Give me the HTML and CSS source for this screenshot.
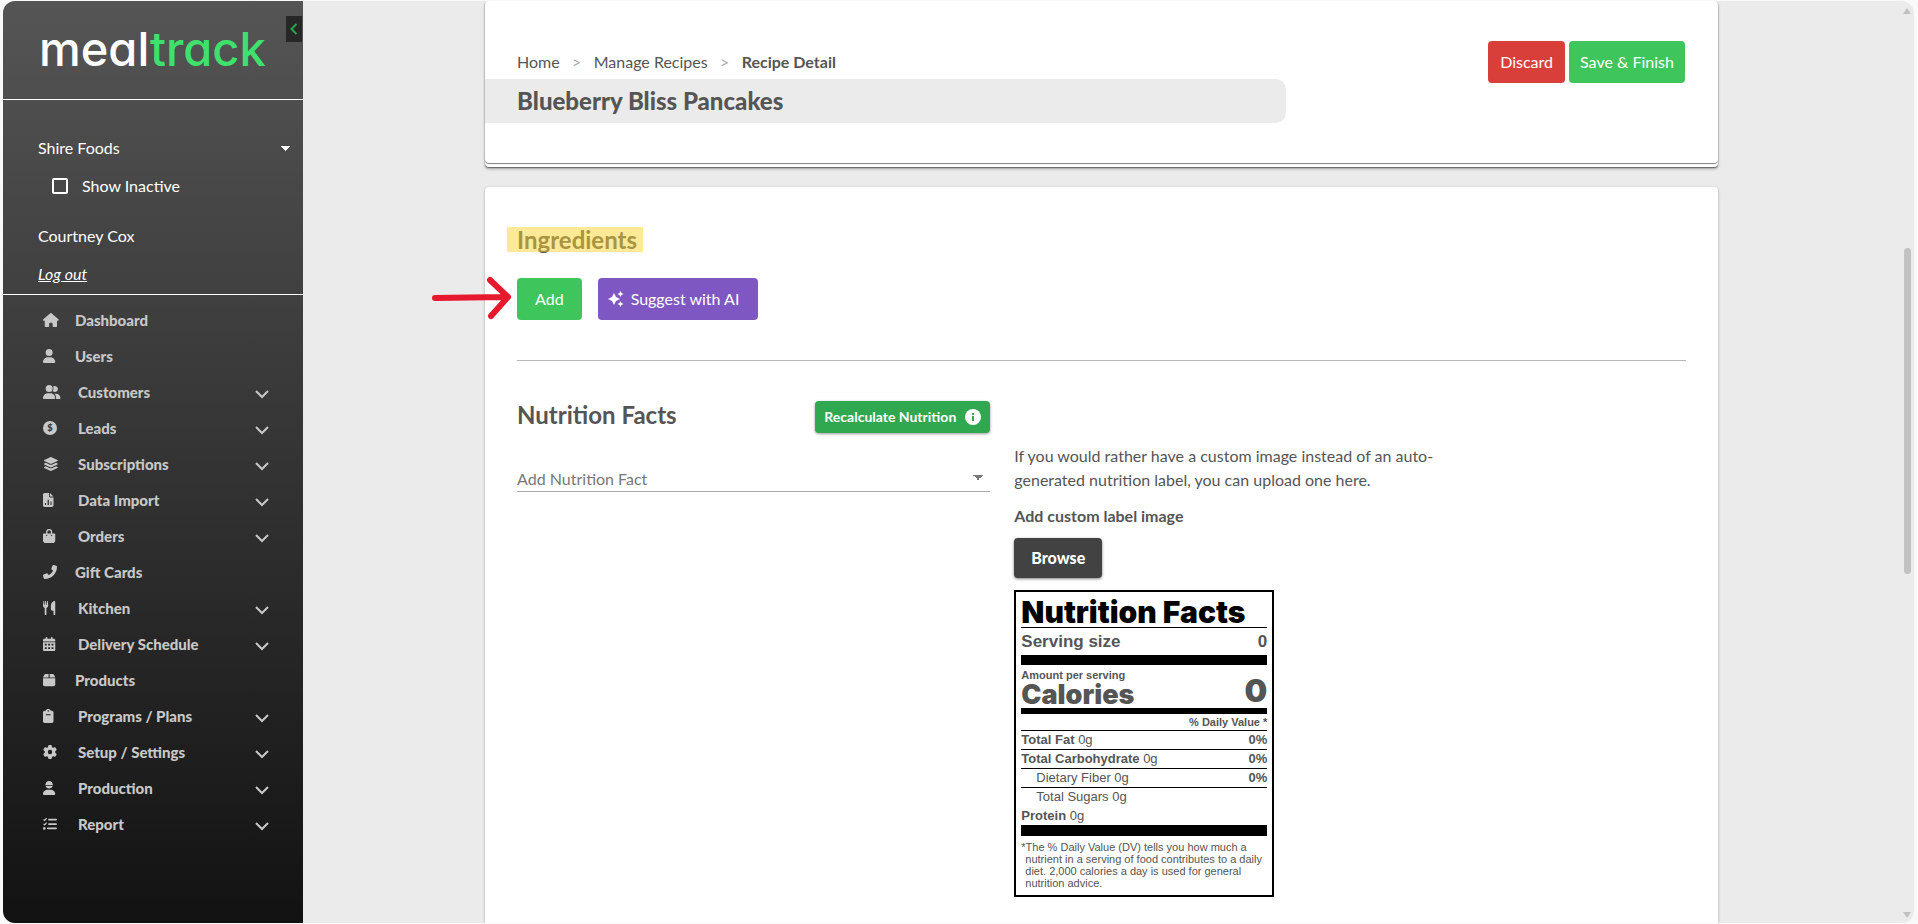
FILE: index.html
```html
<!DOCTYPE html>
<html lang="en">
<head>
    <meta charset="UTF-8">
    <title>Recipe Detail</title>
    <link rel="stylesheet" href="styles.css">
</head>
<body>
    <div class="app">
        <aside class="sidebar">
            <div class="brand">
                <a class="logo" href="#">meal<span class="logo-green">track</span></a>
                <button class="collapse" type="button" aria-label="Collapse menu">
                    <svg width="8" height="12" viewBox="0 0 8 12"><path d="M6.5 1 1.5 6l5 5"/></svg>
                </button>
            </div>
            <div class="account">
                <select class="company" aria-label="Company">
                    <option>Shire Foods</option>
                </select>
                <label class="inactive"><input class="check" type="checkbox">Show Inactive</label>
                <div class="user">Courtney Cox</div>
                <a class="logout" href="#">Log out</a>
            </div>
            <nav class="menu">
                <a class="item" href="#">
                    <svg class="icon" viewBox="0 0 576 512" preserveAspectRatio="xMinYMid"><path d="M575.8 255.5c0 18-15 32.1-32 32.1h-32l.7 160.2c0 2.7-.2 5.4-.5 8.1V472c0 22.1-17.9 40-40 40H392c-22.1 0-40-17.9-40-40v-88c0-17.7-14.3-32-32-32h-64c-17.7 0-32 14.3-32 32v88c0 22.1-17.9 40-40 40h-80c-22.1 0-40-17.9-40-40V287.6H32c-18 0-32-14-32-32.1 0-9 3-17 10-24L266.4 8c7-7 15-8 22-8s15 2 21 7l255.4 224.5c8 7 12 15 11 24z"/></svg>
                    <span>Dashboard</span>
                </a>
                <a class="item" href="#">
                    <svg class="icon" viewBox="0 0 448 512" preserveAspectRatio="xMinYMid"><path d="M224 256A128 128 0 1 0 224 0a128 128 0 1 0 0 256zm-45.7 48C79.8 304 0 383.8 0 482.3 0 498.7 13.3 512 29.7 512h388.6c16.4 0 29.7-13.3 29.7-29.7 0-98.5-79.8-178.3-178.3-178.3z"/></svg>
                    <span>Users</span>
                </a>
                <a class="item more" href="#">
                    <svg class="icon" viewBox="0 0 640 512" preserveAspectRatio="xMinYMid"><path d="M96 128a128 128 0 1 1 256 0 128 128 0 1 1-256 0zM0 482.3C0 383.8 79.8 304 178.3 304h91.4C368.2 304 448 383.8 448 482.3c0 16.4-13.3 29.7-29.7 29.7H29.7C13.3 512 0 498.7 0 482.3zM609.3 512H471.4c5.4-9.4 8.6-20.3 8.6-32v-8c0-60.7-27.1-115.2-69.8-151.8 2.4-.1 4.7-.2 7.1-.2h61.4C567.8 320 640 392.2 640 481.3c0 17-13.8 30.7-30.7 30.7zM432 256c-31 0-59-12.6-79.3-32.9C372.4 196.5 384 163.6 384 128c0-26.8-6.6-52.1-18.3-74.3C384.3 40.1 407.2 32 432 32c61.9 0 112 50.1 112 112s-50.1 112-112 112z"/></svg>
                    <span>Customers</span>
                    <svg class="chevron" viewBox="0 0 14 9"><path d="M1 1l6 6 6-6"/></svg>
                </a>
                <a class="item more" href="#">
                    <svg class="icon" viewBox="0 0 512 512" preserveAspectRatio="xMinYMid"><circle cx="256" cy="256" r="256"/><text class="coin" x="256" y="376" text-anchor="middle">$</text></svg>
                    <span>Leads</span>
                    <svg class="chevron" viewBox="0 0 14 9"><path d="M1 1l6 6 6-6"/></svg>
                </a>
                <a class="item more" href="#">
                    <svg class="icon" viewBox="0 0 576 512" preserveAspectRatio="xMinYMid"><path d="M264.5 5.2c14.9-6.9 32.1-6.9 47 0l218.6 101c8.5 3.9 13.9 12.4 13.9 21.8s-5.4 17.9-13.9 21.8l-218.6 101c-14.9 6.9-32.1 6.9-47 0L45.9 149.8C37.4 145.8 32 137.3 32 128s5.4-17.9 13.9-21.8zM476.9 209.6l53.2 24.6c8.5 3.9 13.9 12.4 13.9 21.8s-5.4 17.9-13.9 21.8l-218.6 101c-14.9 6.9-32.1 6.9-47 0L45.9 277.8C37.4 273.8 32 265.3 32 256s5.4-17.9 13.9-21.8l53.2-24.6 152 70.2c23.4 10.8 50.4 10.8 73.8 0zm-152 198.2 152-70.2 53.2 24.6c8.5 3.9 13.9 12.4 13.9 21.8s-5.4 17.9-13.9 21.8l-218.6 101c-14.9 6.9-32.1 6.9-47 0L45.9 405.8C37.4 401.8 32 393.3 32 384s5.4-17.9 13.9-21.8l53.2-24.6 152 70.2c23.4 10.8 50.4 10.8 73.8 0z"/></svg>
                    <span>Subscriptions</span>
                    <svg class="chevron" viewBox="0 0 14 9"><path d="M1 1l6 6 6-6"/></svg>
                </a>
                <a class="item more" href="#">
                    <svg class="icon" viewBox="0 0 384 512" preserveAspectRatio="xMinYMid"><path fill-rule="evenodd" d="M64 0h160v128c0 18 14 32 32 32h128v288c0 35-29 64-64 64H64c-35 0-64-29-64-64V64C0 29 29 0 64 0zm192 0 128 128H256zM72 368v72h40v-72zm96-120v192h48V248zm104 64v128h40V312z"/></svg>
                    <span>Data Import</span>
                    <svg class="chevron" viewBox="0 0 14 9"><path d="M1 1l6 6 6-6"/></svg>
                </a>
                <a class="item more" href="#">
                    <svg class="icon" viewBox="0 0 448 512" preserveAspectRatio="xMinYMid"><path fill-rule="evenodd" d="M112 160v-48a112 112 0 0 1 224 0v48h80c18 0 32 14 32 32v224c0 53-43 96-96 96H96c-53 0-96-43-96-96V192c0-18 14-32 32-32zm48 0h128v-48a64 64 0 0 0-128 0zm-24 96a24 24 0 1 0 0-48 24 24 0 0 0 0 48zm176 0a24 24 0 1 0 0-48 24 24 0 0 0 0 48z"/></svg>
                    <span>Orders</span>
                    <svg class="chevron" viewBox="0 0 14 9"><path d="M1 1l6 6 6-6"/></svg>
                </a>
                <a class="item" href="#">
                    <svg class="icon" viewBox="0 0 512 512" preserveAspectRatio="xMinYMid"><path d="M347.1 24.6c7.7-18.6 28-28.5 47.4-23.2l88 24C499.9 30.2 512 46 512 64c0 247.4-200.6 448-448 448-18 0-33.8-12.1-38.6-29.5l-24-88c-5.3-19.4 4.6-39.7 23.2-47.4l96-40c16.3-6.8 35.2-2.1 46.3 11.6L207.3 368c70.4-33.3 127.4-90.3 160.7-160.7L318.7 167c-13.7-11.2-18.4-30-11.6-46.3z"/></svg>
                    <span>Gift Cards</span>
                </a>
                <a class="item more" href="#">
                    <svg class="icon" viewBox="0 0 448 512" preserveAspectRatio="xMinYMid"><path d="M0 150 16 14C18-4 46-4 46 14v136h18L80 12c2-16 30-16 32 0l16 138h18V14c0-18 28-18 30 0l16 136c4 55-34 98-66 106v224c0 42-64 42-64 0V256C30 248-4 205 0 150zM416 0c18 0 32 14 32 32v448c0 42-64 42-64 0V352h-32c-35 0-64-29-64-64V176C288 60 380 0 416 0z"/></svg>
                    <span>Kitchen</span>
                    <svg class="chevron" viewBox="0 0 14 9"><path d="M1 1l6 6 6-6"/></svg>
                </a>
                <a class="item more" href="#">
                    <svg class="icon" viewBox="0 0 448 512" preserveAspectRatio="xMinYMid"><path fill-rule="evenodd" d="M96 64V32c0-42 64-42 64 0v32h128V32c0-42 64-42 64 0v32h48c26 0 48 22 48 48v48H0v-48c0-26 22-48 48-48zM0 192h448v272c0 26-22 48-48 48H48c-26 0-48-22-48-48zm64 56v64h72v-64zm124 0v64h72v-64zm124 0v64h72v-64zM64 376v64h72v-64zm124 0v64h72v-64zm124 0v64h72v-64z"/></svg>
                    <span>Delivery Schedule</span>
                    <svg class="chevron" viewBox="0 0 14 9"><path d="M1 1l6 6 6-6"/></svg>
                </a>
                <a class="item" href="#">
                    <svg class="icon" viewBox="0 0 448 512" preserveAspectRatio="xMinYMid"><path d="M98 32h106v128H0l41-90c12-24 32-38 57-38zm146 0h106c25 0 45 14 57 38l41 90H244zM0 192h448v224c0 35-29 64-64 64H64c-35 0-64-29-64-64z"/></svg>
                    <span>Products</span>
                </a>
                <a class="item more" href="#">
                    <svg class="icon" viewBox="0 0 384 512" preserveAspectRatio="xMinYMid"><path fill-rule="evenodd" d="M101 64C120-21 264-21 283 64h37c35 0 64 29 64 64v320c0 35-29 64-64 64H64c-35 0-64-29-64-64V128c0-35 29-64 64-64zm91-16a26 26 0 1 0 0 52 26 26 0 0 0 0-52zm-88 144v32h176v-32z"/></svg>
                    <span>Programs / Plans</span>
                    <svg class="chevron" viewBox="0 0 14 9"><path d="M1 1l6 6 6-6"/></svg>
                </a>
                <a class="item more" href="#">
                    <svg class="icon" viewBox="0 0 512 512" preserveAspectRatio="xMinYMid"><path d="M495.9 166.6c3.2 8.7 .5 18.4-6.4 24.6l-43.3 39.4c1.1 8.3 1.7 16.8 1.7 25.4s-.6 17.1-1.7 25.4l43.3 39.4c6.9 6.2 9.6 15.9 6.4 24.6-4.4 11.9-9.7 23.3-15.8 34.3l-4.7 8.1c-6.6 11-14 21.4-22.1 31.2-5.9 7.2-15.7 9.6-24.5 6.8l-55.7-17.7c-13.4 10.3-28.2 18.9-44 25.4l-12.5 57.1c-2 9.1-9 16.3-18.2 17.8-13.8 2.3-28 3.5-42.5 3.5s-28.7-1.2-42.5-3.5c-9.2-1.5-16.2-8.7-18.2-17.8l-12.5-57.1c-15.8-6.5-30.6-15.1-44-25.4L83.1 425.9c-8.8 2.8-18.6 .3-24.5-6.8-8.1-9.8-15.5-20.2-22.1-31.2l-4.7-8.1c-6.1-11-11.4-22.4-15.8-34.3-3.2-8.7-.5-18.4 6.4-24.6l43.3-39.4C64.6 273.1 64 264.6 64 256s.6-17.1 1.7-25.4L22.4 191.2c-6.9-6.2-9.6-15.9-6.4-24.6 4.4-11.9 9.7-23.3 15.8-34.3l4.7-8.1c6.6-11 14-21.4 22.1-31.2 5.9-7.2 15.7-9.6 24.5-6.8l55.7 17.7c13.4-10.3 28.2-18.9 44-25.4l12.5-57.1c2-9.1 9-16.3 18.2-17.8C227.3 1.2 241.5 0 256 0s28.7 1.2 42.5 3.5c9.2 1.5 16.2 8.7 18.2 17.8l12.5 57.1c15.8 6.5 30.6 15.1 44 25.4l55.7-17.7c8.8-2.8 18.6-.3 24.5 6.8 8.1 9.8 15.5 20.2 22.1 31.2l4.7 8.1c6.1 11 11.4 22.4 15.8 34.3zM256 336a80 80 0 1 0 0-160 80 80 0 1 0 0 160z"/></svg>
                    <span>Setup / Settings</span>
                    <svg class="chevron" viewBox="0 0 14 9"><path d="M1 1l6 6 6-6"/></svg>
                </a>
                <a class="item more" href="#">
                    <svg class="icon" viewBox="0 0 448 512" preserveAspectRatio="xMinYMid"><path d="M96 128a128 128 0 0 1 256 0h16v28H80v-28zm0 54h256C340 300 108 300 96 182zM178 320h92c98 0 178 64 178 162 0 17-13 30-30 30H30c-17 0-30-13-30-30 0-98 80-162 178-162z"/></svg>
                    <span>Production</span>
                    <svg class="chevron" viewBox="0 0 14 9"><path d="M1 1l6 6 6-6"/></svg>
                </a>
                <a class="item more" href="#">
                    <svg class="icon" viewBox="0 0 512 512" preserveAspectRatio="xMinYMid"><path d="M216 64h264c42 0 42 64 0 64H216c-42 0-42-64 0-64zm0 160h264c42 0 42 64 0 64H216c-42 0-42-64 0-64zm-40 160h304c42 0 42 64 0 64H176c-42 0-42-64 0-64z"/><circle cx="48" cy="416" r="48"/><path class="ticks" d="M20 90l42 38 72-84M20 250l42 38 72-84"/></svg>
                    <span>Report</span>
                    <svg class="chevron" viewBox="0 0 14 9"><path d="M1 1l6 6 6-6"/></svg>
                </a>
            </nav>
        </aside>

        <main class="content">
            <header class="card top">
                <div class="top-inner">
                    <div class="top-row">
                        <nav class="crumbs">
                            <a href="#">Home</a>
                            <span class="sep">&gt;</span>
                            <a href="#">Manage Recipes</a>
                            <span class="sep">&gt;</span>
                            <b>Recipe Detail</b>
                        </nav>
                        <div class="actions">
                            <button class="btn red" type="button">Discard</button>
                            <button class="btn green" type="button">Save &amp; Finish</button>
                        </div>
                    </div>
                    <h1 class="title">Blueberry Bliss Pancakes</h1>
                </div>
            </header>

            <section class="card recipe">
                <h2 class="heading"><span class="marked">Ingredients</span></h2>
                <div class="add-row">
                    <svg class="arrow" width="82" height="44" viewBox="0 0 82 44"><path d="M4 22l70-1M59 4l18 17-17 19"/></svg>
                    <button class="btn green add" type="button">Add</button>
                    <button class="btn purple" type="button">
                        <svg width="16" height="16" viewBox="0 0 16 16"><path d="M6 2l2 4 4 2-4 2-2 4-2-4-4-2 4-2zM12.500 0l1 2 2 1-2 1-1 2-1-2-2-1 2-1zM12.500 10l1 2 2 1-2 1-1 2-1-2-2-1 2-1z"/></svg>
                        Suggest with AI
                    </button>
                </div>
                <hr class="line">
                <div class="nutrition">
                    <div class="facts">
                        <div class="facts-head">
                            <h2 class="heading">Nutrition Facts</h2>
                            <button class="recalc" type="button">
                                Recalculate Nutrition
                                <svg width="16" height="16" viewBox="0 0 16 16"><circle cx="8" cy="8" r="8"/><path class="info" d="M7 4h2v2H7zM7 7h2v5H7z"/></svg>
                            </button>
                        </div>
                        <select class="fact-select" aria-label="Add Nutrition Fact">
                            <option>Add Nutrition Fact</option>
                        </select>
                    </div>
                    <div class="custom">
                        <p class="hint">If you would rather have a custom image instead of an auto-generated nutrition label, you can upload one here.</p>
                        <h3 class="sub">Add custom label image</h3>
                        <button class="browse" type="button">Browse</button>
                        <div class="label">
                            <div class="label-title">Nutrition Facts</div>
                            <div class="serving"><span>Serving size</span><span>0</span></div>
                            <div class="amount">Amount per serving</div>
                            <div class="calories"><span>Calories</span><span class="cal-num">0</span></div>
                            <table class="values">
                                <tr><th class="daily" colspan="2">% Daily Value *</th></tr>
                                <tr><td><b>Total Fat</b> 0g</td><td class="pct">0%</td></tr>
                                <tr><td><b>Total Carbohydrate</b> 0g</td><td class="pct">0%</td></tr>
                                <tr><td class="indent">Dietary Fiber 0g</td><td class="pct">0%</td></tr>
                                <tr class="plain"><td class="indent" colspan="2">Total Sugars 0g</td></tr>
                                <tr class="plain"><td colspan="2"><b>Protein</b> 0g</td></tr>
                            </table>
                            <p class="note">*The % Daily Value (DV) tells you how much a nutrient in a serving of food contributes to a daily diet. 2,000 calories a day is used for general nutrition advice.</p>
                        </div>
                    </div>
                </div>
            </section>
        </main>

        <div class="scroll">
            <div class="up"></div>
            <div class="track"><div class="thumb"></div></div>
            <div class="down"></div>
        </div>
    </div>
</body>
</html>
```

FILE: styles.css
```css
*{
    box-sizing: border-box;
}
body{
    margin: 0;
    height: 100vh;
    padding: 1px 4px 1px 3px;
    overflow: hidden;
    background-color: #f9f9f9;
    color: #555;
    font-family: Lato, "Liberation Sans", sans-serif;
    font-size: 16px;
    line-height: 24px;
}
a{
    color: inherit;
    text-decoration: none;
}
button, select, input{
    font: inherit;
}
button{
    border: 0;
    cursor: pointer;
}
.app{
    display: flex;
    height: 100%;
    border-radius: 12px;
    overflow: hidden;
    background-color: #ebebeb;
}

/* sidebar */
.sidebar{
    flex: none;
    width: 300px;
    background: linear-gradient(#555, #121212);
    color: #fff;
}
.brand{
    position: relative;
    height: 99px;
    padding: 20px 36px;
    border-bottom: 1px solid #fff;
}
.logo{
    font-family: Inter, "Liberation Sans", sans-serif;
    font-size: 47px;
    font-weight: 500;
    line-height: 56px;
    font-feature-settings: "cv11";
}
.logo-green{
    color: #3fe06b;
}
.collapse{
    position: absolute;
    top: 15px;
    right: 1px;
    width: 16px;
    height: 26px;
    padding: 0;
    background-color: #272727;
}
.collapse path{
    fill: none;
    stroke: #28a745;
    stroke-width: 2;
}
.account{
    display: flex;
    flex-direction: column;
    align-items: flex-start;
    gap: 14px;
    padding: 36px 12px 8px 35px;
    border-bottom: 1px solid #fff;
}
.company{
    width: 100%;
    height: 24px;
    padding: 0;
    border: 0;
    appearance: none;
    color: #fff;
    background: linear-gradient(to bottom right, #fff 50%, transparent 50%) right 0 top 10px / 5px 5px no-repeat, linear-gradient(to bottom left, #fff 50%, transparent 50%) right 5px top 10px / 5px 5px no-repeat;
}
.inactive{
    display: flex;
    align-items: center;
    gap: 14px;
    padding-left: 14px;
}
.check{
    width: 16px;
    height: 16px;
    margin: 0;
    appearance: none;
    border: 2px solid #fff;
    border-radius: 2px;
}
.user{
    padding-top: 12px;
}
.logout{
    font-style: italic;
    text-decoration: underline;
}
.menu{
    padding: 7px 34px 0 40px;
    color: #c8c8c8;
    font-size: 15px;
    font-weight: 900;
}
.item{
    display: flex;
    align-items: center;
    height: 36px;
}
.item span{
    flex: 1;
}
.icon{
    width: 18px;
    height: 14px;
    margin-right: 14px;
    fill: #c8c8c8;
    overflow: visible;
}
.more .icon{
    margin-right: 17px;
}
.coin{
    fill: #333;
    font-size: 340px;
}
.ticks{
    fill: none;
    stroke: #c8c8c8;
    stroke-width: 44;
}
.chevron{
    width: 14px;
    height: 9px;
    margin-top: 5px;
    fill: none;
    stroke: #c8c8c8;
    stroke-width: 2;
}

/* main column */
.content{
    flex: 1;
    display: flex;
    flex-direction: column;
    align-items: center;
}
.card{
    flex: none;
    width: 77.2%;
    background-color: #fff;
    border-radius: 4px;
}
.top{
    padding-bottom: 4px;
    box-shadow: 0 1px 1px rgba(0,0,0,.4), 0 2px 3px rgba(0,0,0,.3);
}
.top-inner{
    padding: 40px 0;
    border-radius: 4px;
    box-shadow: 0 1px 1px rgba(0,0,0,.5);
}
.top-row{
    display: flex;
    justify-content: space-between;
    height: 38px;
    padding: 0 33px 0 32px;
}
.crumbs{
    display: flex;
    padding-top: 9px;
}
.crumbs b{
    font-weight: 700;
}
.sep{
    width: 34px;
    text-align: center;
    color: #aaa;
}
.actions{
    display: flex;
    gap: 4px;
}
.btn{
    display: flex;
    align-items: center;
    height: 42px;
    padding: 0 11px;
    border-radius: 4px;
    color: #fff;
}
.red{
    padding: 0 12px;
    background-color: #d83f3a;
}
.green{
    background-color: #3ec65d;
}
.purple{
    gap: 7px;
    padding: 0 19px 0 10px;
    background-color: #7e57c2;
}
.purple svg{
    fill: #fff;
}
.title{
    width: 65%;
    margin: 0;
    padding-left: 32px;
    background-color: #ebebeb;
    border-radius: 0 10px 10px 0;
    font-size: 24px;
    font-weight: 900;
    line-height: 44px;
}
.recipe{
    flex: 1;
    margin-top: 20px;
    padding: 39px 32px 0;
    border-radius: 4px 4px 0 0;
    box-shadow: 0 1px 3px rgba(0,0,0,.3);
}
.heading{
    margin: 0;
    font-size: 24px;
    font-weight: 700;
    line-height: 28px;
}
.marked{
    position: relative;
}
/* highlighter stroke over the word */
.marked:after{
    content: "";
    position: absolute;
    left: -10px;
    right: -6px;
    top: 2px;
    height: 25px;
    background-color: rgba(253,211,45,.5);
}
.add-row{
    position: relative;
    display: flex;
    gap: 16px;
    margin-top: 24px;
}
.add{
    padding: 0 18px;
}
.arrow{
    position: absolute;
    left: -86px;
    top: -2px;
    fill: none;
    stroke: #e6192e;
    stroke-width: 6;
    stroke-linecap: round;
    stroke-linejoin: round;
}
.line{
    height: 1px;
    margin: 40px 0;
    border: 0;
    background-color: #b8b8b8;
}
.nutrition{
    display: flex;
}
.facts{
    width: 42.2%;
    padding-right: 20px;
}
.facts-head{
    display: flex;
    justify-content: space-between;
}
.recalc{
    display: flex;
    align-items: center;
    gap: 9px;
    height: 32px;
    padding: 0 9px;
    border-radius: 4px;
    background-color: #2fa84f;
    box-shadow: 0 1px 3px rgba(0,0,0,.4);
    color: #fff;
    font-size: 14px;
    font-weight: 700;
}
.recalc svg{
    fill: #fff;
}
.recalc .info{
    fill: #2fa84f;
}
.fact-select{
    width: 100%;
    height: 26px;
    margin-top: 33px;
    padding: 0;
    appearance: none;
    border: 0;
    border-bottom: 1px solid #aaa;
    color: #777;
    background: linear-gradient(to bottom right, #777 50%, transparent 50%) right 7px top 9px / 5px 5px no-repeat, linear-gradient(to bottom left, #777 50%, transparent 50%) right 12px top 9px / 5px 5px no-repeat;
}
.custom{
    flex: 1;
    padding: 43px 0 0 4px;
}
.hint{
    max-width: 440px;
    margin: 0 0 12px;
}
.sub{
    margin: 0 0 10px;
    font-size: 16px;
    font-weight: 700;
    line-height: 24px;
}
.browse{
    height: 40px;
    padding: 0 17px;
    border-radius: 4px;
    background-color: #424242;
    box-shadow: 0 1px 3px rgba(0,0,0,.5);
    color: #fff;
    font-weight: 900;
}

/* nutrition label */
.label{
    width: 260px;
    margin-top: 12px;
    padding: 5px 5px 0;
    border: 2px solid #000;
    font-family: "Liberation Sans", Arial, sans-serif;
    font-size: 13px;
}
.label-title{
    color: #000;
    border-bottom: 1px solid #000;
    font-family: Inter, "Liberation Sans", sans-serif;
    font-size: 30px;
    font-weight: 900;
    line-height: 30px;
}
.serving{
    display: flex;
    justify-content: space-between;
    border-bottom: 10px solid #000;
    font-size: 17px;
    font-weight: 700;
    line-height: 27px;
}
.amount{
    padding-top: 4px;
    font-size: 11px;
    font-weight: 700;
    line-height: 12px;
}
.calories{
    display: flex;
    justify-content: space-between;
    border-bottom: 6px solid #000;
    font-family: Inter, "Liberation Sans", sans-serif;
    font-size: 27px;
    font-weight: 900;
    line-height: 27px;
}
.cal-num{
    font-size: 32px;
    line-height: 20px;
}
.values{
    width: 100%;
    border-collapse: collapse;
    border-bottom: 11px solid #000;
}
.values th, .values td{
    height: 19px;
    padding: 0;
    border-top: 1px solid #000;
    line-height: 18px;
}
.values .daily{
    height: 16px;
    border: 0;
    font-size: 11px;
    line-height: 16px;
    text-align: right;
}
.values .plain + .plain td{
    border: 0;
}
.values .indent{
    padding-left: 15px;
}
.values .pct{
    font-weight: 700;
    text-align: right;
}
.note{
    margin: 5px 0 6px;
    padding-left: 4px;
    text-indent: -4px;
    font-size: 11px;
    line-height: 12px;
}

/* scrollbar */
.scroll{
    flex: none;
    display: flex;
    flex-direction: column;
    align-items: center;
    width: 14px;
    padding: 7px 0 5px;
}
.up, .down{
    border: 4px solid transparent;
}
.up{
    border-top: 0;
    border-bottom: 6px solid #c1c1c1;
}
.down{
    border-bottom: 0;
    border-top: 6px solid #c1c1c1;
}
.track{
    flex: 1;
    display: flex;
    flex-direction: column;
    justify-content: center;
    padding-bottom: 104px;
}
.thumb{
    width: 7px;
    height: 41%;
    border-radius: 4px;
    background-color: #c1c1c1;
}
```
